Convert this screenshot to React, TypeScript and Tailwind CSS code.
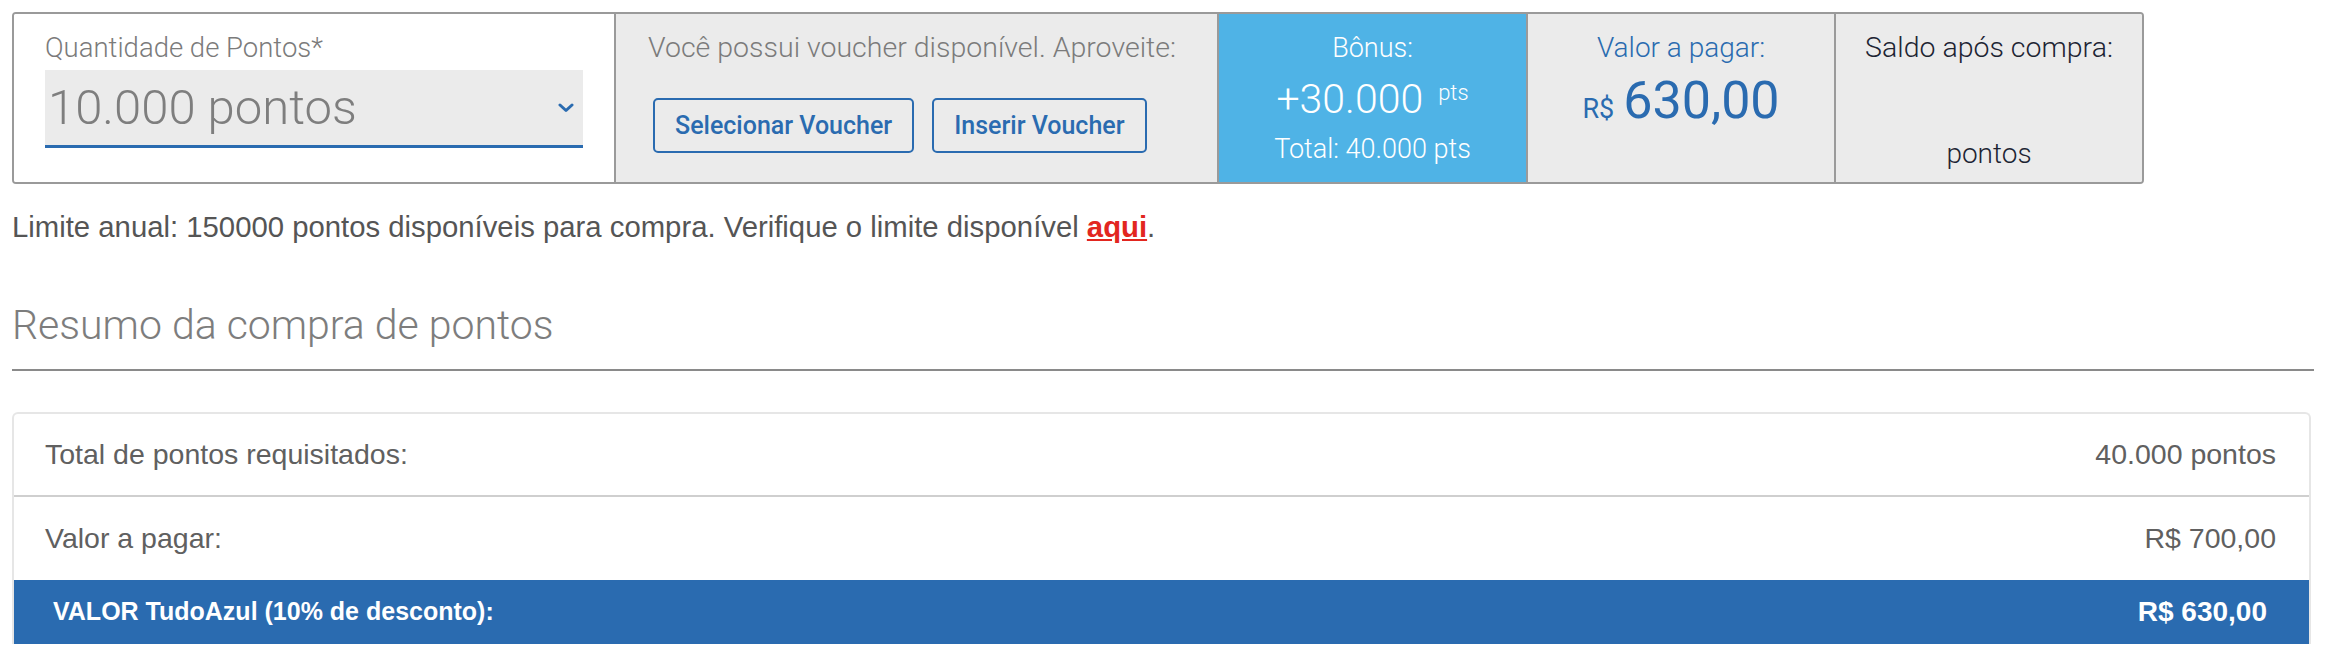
const light = "font-['Roboto','Liberation_Sans',Arial,sans-serif] font-light";

function Chevron() {
  return (
    <svg width="16" height="10" viewBox="0 0 16 10" className="shrink-0">
      <polyline points="2,2 8,7.5 14,2" fill="none" stroke="#2a6bb0" strokeWidth="3" strokeLinecap="round" strokeLinejoin="round" />
    </svg>
  );
}

function PointsPanel() {
  return (
    <div className="flex w-[2132px] h-[172px] border-2 border-[#9a9a9a] rounded-[4px] overflow-hidden">
      {/* quantidade */}
      <div className="w-[602px] shrink-0 bg-white border-r-2 border-[#9a9a9a] pl-[31px] pt-[18px]">
        <div className={`${light} text-[27.5px] leading-[32px] text-[#7b7b7b]`}>Quantidade de Pontos*</div>
        <div className="mt-[6px] w-[538px] h-[78px] bg-[#ebebeb] border-b-[3px] border-[#2a6bb0] flex items-center justify-between pl-[3px] pr-[9px]">
          <span className={`${light} text-[49px] leading-none text-[#7e7e7e]`}>10.000 pontos</span>
          <Chevron />
        </div>
      </div>

      {/* voucher */}
      <div className="w-[603px] shrink-0 bg-[#ebebeb] border-r-2 border-[#9a9a9a] pl-[32px] pt-[18px]">
        <div className={`${light} text-[28.5px] leading-[32px] text-[#7b7b7b] whitespace-nowrap`}>Você possui voucher disponível. Aproveite:</div>
        <div className="mt-[34px] ml-[5px] flex gap-[18px]">
          <button className="h-[55px] px-[20px] border-2 border-[#2a6bb0] rounded-[5px] text-[#2a6bb0] text-[25px] font-['Roboto',sans-serif] font-medium">
            Selecionar Voucher
          </button>
          <button className="h-[55px] px-[20px] border-2 border-[#2a6bb0] rounded-[5px] text-[#2a6bb0] text-[25px] font-['Roboto',sans-serif] font-medium">
            Inserir Voucher
          </button>
        </div>
      </div>

      {/* bonus */}
      <div className={`w-[309px] shrink-0 bg-[#4fb3e6] border-r-2 border-[#9a9a9a] pt-[18px] text-center text-white ${light}`}>
        <div className="text-[27px] leading-[32px]">Bônus:</div>
        <div className="text-[41px] leading-[58px] whitespace-nowrap">
          +30.000<span className="ml-[15px] text-[22px] align-[13px]">pts</span>
        </div>
        <div className="mt-[6px] text-[27px] leading-[30px]">Total: 40.000 pts</div>
      </div>

      {/* valor */}
      <div className={`w-[308px] shrink-0 bg-[#ebebeb] border-r-2 border-[#9a9a9a] pt-[18px] text-center text-[#2a6bb0] ${light}`}>
        <div className="text-[28px] leading-[32px]">Valor a pagar:</div>
        <div className="leading-[74px] whitespace-nowrap">
          <span className="text-[27px] font-normal">R$</span>
          <span className="ml-[9px] text-[52px] font-normal">630,00</span>
        </div>
      </div>

      {/* saldo */}
      <div className={`flex-1 bg-[#ebebeb] pt-[18px] text-center text-[#1d2433] ${light}`}>
        <div className="text-[28.5px] leading-[32px]">Saldo após compra:</div>
        <div className="mt-[75px] text-[28px] leading-[30px]">pontos</div>
      </div>
    </div>
  );
}

function SummaryRow({ label, value, last }: { label: string; value: string; last?: boolean }) {
  return (
    <div className={`h-[83px] flex items-center justify-between pl-[31px] pr-[33px] text-[28.5px] text-[#606060] ${last ? '' : 'border-b-2 border-[#cfcfcf]'}`}>
      <span>{label}</span>
      <span>{value}</span>
    </div>
  );
}

export default function App() {
  return (
    <div className="min-h-screen w-full bg-white font-['Liberation_Sans',Arial,sans-serif]">
      <div className="px-[12px] pt-[12px]">
        <PointsPanel />

        <p className="mt-[27px] text-[29.3px] leading-[32px] text-[#555]">
          Limite anual: 150000 pontos disponíveis para compra. Verifique o limite disponível{' '}
          <a href="#" className="font-bold text-[#e2261f] underline">aqui</a>.
        </p>

        <h2 className={`mt-[59px] text-[41px] leading-[46px] text-[#7d7d7d] ${light}`}>Resumo da compra de pontos</h2>
        <div className="mt-[21px] border-t-2 border-[#8a8a8a]" />

        <div className="mt-[41px] mr-[3px] border-2 border-b-0 border-[#e6e6e6] rounded-t-[6px] overflow-hidden">
          <SummaryRow label="Total de pontos requisitados:" value="40.000 pontos" />
          <SummaryRow label="Valor a pagar:" value="R$ 700,00" last />
          <div className="h-[64px] bg-[#2a6bb0] flex items-center justify-between pl-[39px] pr-[42px] text-white font-bold">
            <span className="text-[25px]">VALOR TudoAzul (10% de desconto):</span>
            <span className="text-[28px]">R$ 630,00</span>
          </div>
        </div>
      </div>
    </div>
  );
}
